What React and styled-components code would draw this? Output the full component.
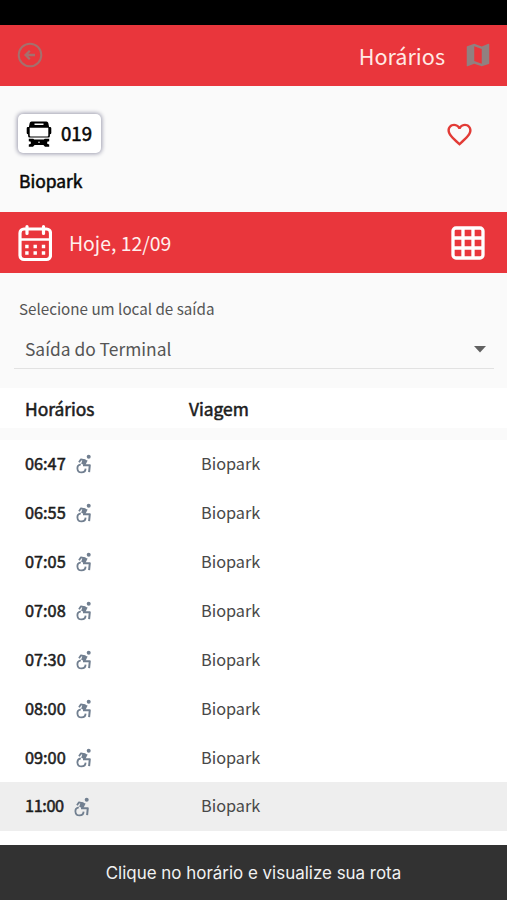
import React from "react";
import styled, { createGlobalStyle } from "styled-components";
import { MdMap, MdFavoriteBorder } from "react-icons/md";

const GlobalStyle = createGlobalStyle`
  * { box-sizing: border-box; }
  body {
    margin: 0;
    background: #fff;
    color: #1c1c1c;
    font-family: "Noto Sans CJK SC", "Open Sans", sans-serif;
  }
`;

const Screen = styled.main`
  display: flex;
  flex-direction: column;
  width: 507px;
  height: 900px;
  overflow: hidden;
  background: #fff;
`;

const StatusBar = styled.div`
  flex: none;
  height: 25px;
  background: #000;
`;

const Header = styled.header`
  flex: none;
  display: flex;
  align-items: center;
  height: 61px;
  padding: 0 17px;
  background: #e9363c;
`;

const BackIcon = styled.svg`
  width: 26px;
  height: 26px;
  margin-bottom: 2px;
  color: #a5706d;
`;

const Label = styled.span`
  font-size: ${(p) => p.$size}px;
  line-height: 1;
  letter-spacing: ${(p) => p.$track || 0}px;
  color: ${(p) => p.$color || "inherit"};
  white-space: nowrap;
  -webkit-text-stroke: ${(p) => (p.$strong ? "0.55px currentColor" : "0")};
`;

const Title = styled(Label).attrs({ as: "h1" })`
  margin: 0 18px 0 auto;
  font-weight: 400;
`;

const MapIcon = styled(MdMap)`
  width: 30px;
  height: 30px;
  margin: 0 -3px 2px 0;
  color: #918080;
`;

const LineSection = styled.section`
  flex: none;
  display: flex;
  justify-content: space-between;
  height: 126px;
  padding: 28px 34px 0 18px;
  background: #fafafa;
`;

const LineInfo = styled.div`
  display: flex;
  flex-direction: column;
  align-items: flex-start;
  gap: 19px;
  color: #080808;
`;

const LineBadge = styled.div`
  display: flex;
  align-items: center;
  gap: 9px;
  width: 83px;
  height: 39px;
  padding: 0 0 0 8px;
  border-radius: 5px;
  background: #fff;
  box-shadow: 0 0 4px 1px #9c9cae;
`;

const BusIcon = styled.svg`
  width: 26px;
  height: 26px;
`;

const LineName = styled(Label)`
  padding-left: 1px;
`;

const HeartIcon = styled(MdFavoriteBorder)`
  width: 29px;
  height: 29px;
  margin: 6px -1px 0 0;
  color: #e23b36;
`;

const DateBar = styled.section`
  flex: none;
  display: flex;
  align-items: center;
  height: 61px;
  padding: 0 22px 0 18px;
  background: #e9363c;
  color: #fff;
`;

const CalendarIcon = styled.svg`
  width: 34px;
  height: 38px;
  margin-right: 17px;
`;

const GridIcon = styled.svg`
  width: 34px;
  height: 34px;
  margin-left: auto;
`;

const Form = styled.section`
  flex: none;
  height: 115px;
  padding: 28px 13px 0 14px;
  background: #fafafa;
`;

const FieldLabel = styled.div`
  display: flex;
  align-items: center;
  height: 16px;
  padding-left: 5px;
`;

const Select = styled.div`
  display: flex;
  align-items: center;
  justify-content: space-between;
  height: 52px;
  padding: 13px 8px 0 11px;
  border-bottom: 1px solid #e2e2e2;
`;

const Caret = styled.svg`
  width: 12px;
  height: 7px;
  fill: #616161;
`;

const columns = "164px 1fr";

const TableHead = styled.div`
  flex: none;
  display: grid;
  grid-template-columns: ${columns};
  align-items: center;
  height: 40px;
  padding: 1px 25px 0;
`;

const Divider = styled.div`
  flex: none;
  height: 12px;
  background: #fafafa;
`;

const Rows = styled.div`
  flex: none;
  display: grid;
  grid-template-rows: repeat(8, 1fr);
  height: 391px;
`;

const Row = styled.div`
  display: grid;
  grid-template-columns: ${columns};
  align-items: center;
  padding: 0 25px 2px;
  background: ${(p) => (p.$active ? "#eee" : "#fff")};
`;

const Time = styled.div`
  display: flex;
  align-items: center;
  gap: 10px;
`;

const AccessibleIcon = styled.svg`
  width: 16px;
  height: 20px;
  margin-top: 2px;
  color: #717f90;
`;

const Trip = styled(Label)`
  padding-left: 12px;
`;

const Snackbar = styled.footer`
  display: flex;
  align-items: center;
  justify-content: center;
  height: 55px;
  margin-top: auto;
  padding-top: 1px;
  background: #323232;
  font-family: Inter, Roboto, sans-serif;
`;

const times = ["06:47", "06:55", "07:05", "07:08", "07:30", "08:00", "09:00", "11:00"];

function Accessible() {
  return (
    <AccessibleIcon viewBox="0 0 16 20" fill="none" stroke="currentColor">
      <circle cx="12.700" cy="2.800" r="2" fill="currentColor" stroke="none" />
      <path d="M3 8.300l2-3 4.500 1" strokeWidth="1.800" strokeLinejoin="round" />
      <path d="M6.800 5l4.800 1.600-2.400 4.800-4-1.600z" fill="currentColor" stroke="none" />
      <path d="M7 11.200h6.800l-.7 7" strokeWidth="2" strokeLinejoin="round" />
      <path d="M4.800 10.300A4.100 4.100 0 1 0 9.600 14.600" strokeWidth="1.800" />
    </AccessibleIcon>
  );
}

export default function App() {
  return (
    <Screen>
      <GlobalStyle />
      <StatusBar />
      <Header>
        <BackIcon viewBox="0 0 26 26" fill="none" stroke="currentColor" strokeWidth="2">
          <circle cx="13" cy="13" r="11.300" />
          <path d="M18 13H9M12.800 8.800L8.600 13l4.200 4.200" strokeWidth="2.300" />
        </BackIcon>
        <Title $size={21.6} $color="#ffe9e5">Horários</Title>
        <MapIcon />
      </Header>

      <LineSection>
        <LineInfo>
          <LineBadge>
            <BusIcon viewBox="0 0 26 26">
              <path
                fillRule="evenodd"
                d="M5.500.5h15q1.500 0 1.800 1.500l.8 4h1q1.200 0 1.200 1.200V12q0 1.200-1.400 1.200V15q0 1.500-1.500 1.500H3.600Q2.100 16.500 2.100 15v-1.800Q.7 13.200.7 12V7.200Q.7 6 1.900 6h1l.8-4Q4 .5 5.500.5zM3.700 6.700v7.700q0 1 1 1h16.600q1 0 1-1V6.700zM8.500 2.400v1.700h9V2.400z"
              />
              <path d="M2.800 17.800h4.400l1 .8h9.600l1-.8h4.400v2.400l-2 .6v2l2 .6V25.700h-4.200l-1.600-1.700H8.600l-1.600 1.700H2.800v-2.300l2-.6v-2l-2-.6z" />
              <circle cx="13" cy="21.300" r=".8" fill="#fff" />
            </BusIcon>
            <Label $size={18.6} $strong>019</Label>
          </LineBadge>
          <LineName $size={17.4} $strong>Biopark</LineName>
        </LineInfo>
        <HeartIcon />
      </LineSection>

      <DateBar>
        <CalendarIcon viewBox="0 0 34 38" fill="none" stroke="currentColor" strokeWidth="3.200">
          <rect x="2" y="5" width="30.500" height="30.500" rx="4" />
          <path d="M2 15.500h30" strokeWidth="2.500" />
          <path d="M9 2.500v7M25.500 2.500v7" strokeLinecap="round" />
          <path
            d="M7.200 22.500h3.400M15.500 22.500h3.400M23.800 22.500h3.400M7.200 29h3.400M15.500 29h3.400M23.800 29h3.400"
            strokeWidth="3.400"
          />
        </CalendarIcon>
        <Label $size={19.4} $color="#fff0ed">Hoje, 12/09</Label>
        <GridIcon viewBox="0 0 34 34" fill="none" stroke="currentColor" strokeWidth="3.300">
          <rect x="2" y="2" width="30" height="30" rx="3" />
          <path d="M12 2v30M22 2v30M2 12h30M2 22h30" />
        </GridIcon>
      </DateBar>

      <Form>
        <FieldLabel>
          <Label $size={15.2} $color="#555">Selecione um local de saída</Label>
        </FieldLabel>
        <Select>
          <Label $size={17.4} $color="#555">Saída do Terminal</Label>
          <Caret viewBox="0 0 12 7">
            <path d="M0 0h12L6 6.500z" />
          </Caret>
        </Select>
      </Form>

      <TableHead>
        <Label $size={17.4} $strong>Horários</Label>
        <Label $size={17.4} $strong>Viagem</Label>
      </TableHead>
      <Divider />
      <Rows>
        {times.map((time) => (
          <Row key={time} $active={time === "11:00"}>
            <Time>
              <Label $size={16.3} $track={time.startsWith("11") ? -0.4 : 0} $strong>
                {time}
              </Label>
              <Accessible />
            </Time>
            <Trip $size={16.3} $color="#484848">Biopark</Trip>
          </Row>
        ))}
      </Rows>

      <Snackbar>
        <Label $size={16.95} $color="#f1f1f1">Clique no horário e visualize sua rota</Label>
      </Snackbar>
    </Screen>
  );
}
